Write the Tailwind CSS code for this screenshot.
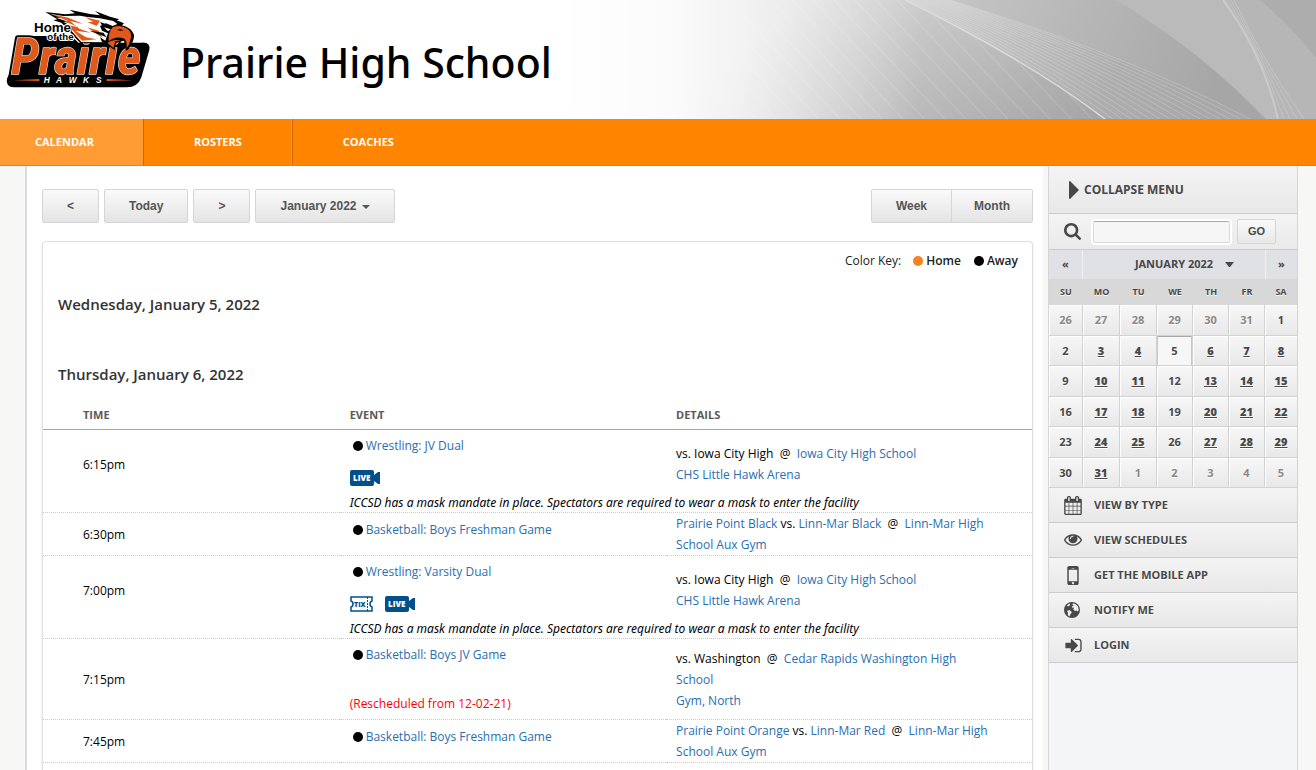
<!DOCTYPE html>
<html lang="en">
<head>
    <meta charset="UTF-8">
    <meta name="viewport" content="width=device-width, initial-scale=1.0">
    <title>Prairie High School - Calendar</title>
    <script src="https://cdn.jsdelivr.net/npm/@tailwindcss/browser@4"></script>
</head>
<body class="flex min-h-screen flex-col bg-[#f7f7f5] font-['Open_Sans',sans-serif] text-xs text-black">
    <!-- banner -->
    <header class="relative flex h-[119px] shrink-0 overflow-hidden bg-white">
        <svg class="absolute right-0 top-0 h-[119px] w-[756px]" viewBox="0 0 756 119" aria-hidden="true">
            <defs>
                <linearGradient id="base" gradientUnits="userSpaceOnUse" x1="250" y1="0" x2="400" y2="210">
                    <stop offset="0" stop-color="#d8d8d8"/>
                    <stop offset="1" stop-color="#a6a6a6"/>
                </linearGradient>
                <linearGradient id="band" gradientUnits="userSpaceOnUse" x1="345" y1="0" x2="640" y2="119">
                    <stop offset="0" stop-color="#d2d2d2"/>
                    <stop offset=".7" stop-color="#adadad"/>
                    <stop offset="1" stop-color="#a8a8a8"/>
                </linearGradient>
                <linearGradient id="dark" gradientUnits="userSpaceOnUse" x1="400" y1="0" x2="640" y2="119">
                    <stop offset="0" stop-color="#c4c4c4"/>
                    <stop offset="1" stop-color="#a6a6a6"/>
                </linearGradient>
                <linearGradient id="fade">
                    <stop offset="0" stop-color="#fff"/>
                    <stop offset=".3" stop-color="#fff" stop-opacity=".9"/>
                    <stop offset=".5" stop-color="#fff" stop-opacity=".7"/>
                    <stop offset=".7" stop-color="#fff" stop-opacity=".4"/>
                    <stop offset="1" stop-color="#fff" stop-opacity="0"/>
                </linearGradient>
                <pattern id="hatch" width="21" height="40" patternUnits="userSpaceOnUse" patternTransform="skewX(43)">
                    <path d="M1 0V40" stroke="#fff" stroke-opacity=".22"/>
                </pattern>
            </defs>
            <rect width="756" height="119" fill="#b6b6b6"/>
            <path d="M0 0H345Q467 60 545 119H0Z" fill="url(#base)"/>
            <path d="M180 0H345Q467 60 545 119H180Z" fill="url(#hatch)"/>
            <path d="M345 0H556Q640 50 706 119H545Q467 60 345 0Z" fill="url(#dark)"/>
            <path d="M345 0H390Q570 56 690 119H545Q467 60 345 0Z" fill="url(#band)"/>
            <path d="M556 0H662Q702 50 718 119H706Q640 50 556 0Z" fill="#bababa"/>
            <path d="M700 0H756V58Q730 25 700 0Z" fill="#adadad"/>
            <g fill="none" stroke="#fff" stroke-opacity=".2">
                <path d="M348 0Q474 60 553 119M351 0Q480 60 562 119M354 0Q487 60 571 119M357 0Q494 60 580 119M360 0Q501 59 590 119M363 0Q508 59 600 119M366 0Q515 59 610 119M369 0Q522 58 620 119M372 0Q529 58 630 119M375 0Q536 58 640 119M378 0Q543 57 650 119M381 0Q550 57 660 119M384 0Q557 57 670 119M387 0Q564 56 680 119M390 0Q570 56 690 119"/>
                <path d="M665 0Q700 50 724 119M668 0Q701 55 730 119M671 0Q703 60 737 119M674 0Q703 60 744 119"/>
            </g>
            <path d="M345 0Q467 60 545 119" fill="none" stroke="#dcdcdc" stroke-width="1.5"/>
            <path d="M663 0Q704 56 718 119" fill="none" stroke="#cacaca" stroke-width="2"/>
            <rect width="360" height="119" fill="url(#fade)"/>
        </svg>
        <div class="relative flex items-start">
            <svg class="h-[100px] w-[170px] shrink-0" viewBox="0 0 510 300" role="img" aria-label="Home of the Prairie Hawks">
                <path d="M58 108H215L235 128H425Q452 126 448 150L424 232Q414 262 380 262H42Q16 260 21 236L34 205L54 140L48 124Q48 108 58 108Z" fill="#000"/>
                <g font-family="Liberation Sans Narrow, Roboto Condensed, Liberation Sans, sans-serif" font-weight="700" font-style="italic" font-size="150" stroke-linejoin="round">
                    <text x="34" y="221" fill="#000" stroke="#000" stroke-width="16">Prairie</text>
                    <text x="34" y="221" fill="#e0581a" stroke="#ddd" stroke-width="4" paint-order="stroke">Prairie</text>
                </g>
                <!-- hawk head -->
                <path d="M136 36L196 43L225 40L208 29L270 42L300 46L285 33L330 50L358 58L350 61L372 70L366 76Q395 84 402 104Q403 120 392 136Q388 148 378 152L372 122L348 128L344 150L310 128H240L212 98L184 68L160 61L172 58Z" fill="#000"/>
                <path d="M148 41L190 48L240 47L262 51L300 55L340 63L352 72L338 78L318 70L300 78L306 92L324 100L316 122L300 112L306 126H244L214 92L226 84L190 66L214 68L168 53L188 53Z" fill="#fff"/>
                <path d="M152 42L205 53L250 72L210 63L238 86L272 98L226 92L258 112L290 118L246 122L222 96L205 76L236 82L190 62L206 64Z" fill="#e0581a"/>
                <path d="M256 52L300 62L290 78L262 66L280 66ZM262 82L296 92L308 114L284 98Z" fill="#e0581a"/>
                <path d="M300 66L346 82L334 90L326 84L312 86ZM268 92L310 98L320 112L300 104Z" fill="#000"/>
                <path d="M312 82L332 88L324 94Z" fill="#fff"/>
                <path d="M338 82Q362 72 382 86Q398 98 392 116Q390 132 380 144Q382 118 368 114Q344 108 326 124Q324 96 338 82Z" fill="#e0581a"/>
                <path d="M350 90Q362 85 370 92Q360 93 350 90Z" fill="#000"/>
                <path d="M322 128Q340 116 362 122L346 124L340 144Z" fill="#e0581a"/>
                <g font-family="Liberation Sans, Arial, sans-serif" font-weight="700" paint-order="stroke" stroke-linejoin="round">
                    <text x="102" y="96" font-size="40" fill="#000" stroke="#fff" stroke-width="6">Home</text>
                    <text x="142" y="120" font-size="29" fill="#000" stroke="#fff" stroke-width="6">of the</text>
                    <text y="248" font-size="25" font-style="italic" fill="#fff"><tspan x="131">H</tspan><tspan x="168">A</tspan><tspan x="206">W</tspan><tspan x="249">K</tspan><tspan x="288">S</tspan></text>
                </g>
                <path d="M40 241L118 237V243ZM398 241L320 237V243Z" fill="#e0581a"/>
            </svg>
            <h1 class="ml-2.5 mt-8 font-['Noto_Sans','Open_Sans',sans-serif] text-[41px] font-medium leading-[60px]">Prairie High School</h1>
        </div>
    </header>

    <!-- main nav -->
    <nav class="flex h-[47px] shrink-0 border-b border-[#f57c00] bg-[#ff8400] text-[11px] font-bold leading-[46px] text-white">
        <a href="#" class="border-r border-[#cc6900] bg-[#ff9c33] pl-[35px] pr-[49px]">CALENDAR</a>
        <a href="#" class="border-r border-[#cc6900] px-[50px] shadow-[inset_-1px_0_0_#ff9c33]">ROSTERS</a>
        <a href="#" class="px-[50px]">COACHES</a>
    </nav>

    <div class="flex flex-1 pl-[25px] pr-[18px]">
        <main class="flex min-w-0 flex-1 flex-col border-l-2 border-[#dcdcdc] bg-white pl-[15px] pr-2.5 pt-[23px]">
            <div class="flex justify-between font-['Liberation_Sans',Arial,sans-serif] font-bold text-[#555] [text-shadow:0_1px_0_#fff]">
                <div class="flex gap-[5px]">
                    <button type="button" aria-label="Previous" class="h-[34px] rounded-xs border border-[#d5d5d5] bg-linear-to-b from-[#fafafa] to-[#e4e4e4] px-6">&lt;</button>
                    <button type="button" class="h-[34px] rounded-xs border border-[#d5d5d5] bg-linear-to-b from-[#fafafa] to-[#e4e4e4] px-6">Today</button>
                    <button type="button" aria-label="Next" class="h-[34px] rounded-xs border border-[#d5d5d5] bg-linear-to-b from-[#fafafa] to-[#e4e4e4] px-6">&gt;</button>
                    <button type="button" class="flex h-[34px] items-center gap-[5px] rounded-xs border border-[#d5d5d5] bg-linear-to-b from-[#fafafa] to-[#e4e4e4] px-6">
                        January 2022
                        <svg class="mt-0.5 h-1 w-2" viewBox="0 0 8 4" fill="#555"><path d="M0 0H8L4 4Z"/></svg>
                    </button>
                </div>
                <div class="flex">
                    <button type="button" class="h-[34px] rounded-l-xs border border-[#d5d5d5] bg-linear-to-b from-[#fafafa] to-[#e4e4e4] px-6">Week</button>
                    <button type="button" class="-ml-px h-[34px] rounded-r-xs border border-[#d5d5d5] bg-linear-to-b from-[#fafafa] to-[#e4e4e4] px-[22px]">Month</button>
                </div>
            </div>

            <section class="mt-[18px] flex-1 rounded-t border border-b-0 border-[#e0e0e0] pt-2 shadow-sm">
                <div class="flex justify-end pr-3.5 leading-[21px] text-[#222]">
                    <span>Color Key:</span>
                    <span class="ml-3 flex items-center gap-[3px] font-semibold"><i class="size-2.5 rounded-full bg-[#f58220]"></i>Home</span>
                    <span class="ml-[13px] flex items-center gap-[3px] font-semibold"><i class="size-2.5 rounded-full bg-black"></i>Away</span>
                </div>
                <h2 class="mt-[23px] pl-[15px] text-[15px] font-semibold leading-5 text-[#333]">Wednesday, January 5, 2022</h2>
                <h2 class="mt-[50px] pl-[15px] text-[15px] font-semibold leading-5 text-[#333]">Thursday, January 6, 2022</h2>

                <table class="mt-[23px] w-full table-fixed border-separate border-spacing-0 leading-[21px] [&_a]:text-[#2a6eb0]">
                    <thead class="text-left text-[11px] leading-4 text-[#5a5a5a]">
                        <tr>
                            <th class="w-[30%] border-b border-[#a8a8a8] pb-1.5 pl-10">TIME</th>
                            <th class="w-[33%] border-b border-[#a8a8a8] pb-1.5 pl-2.5">EVENT</th>
                            <th class="border-b border-[#a8a8a8] pb-1.5 pl-2.5">DETAILS</th>
                        </tr>
                    </thead>
                    <tbody>
                        <tr>
                            <td class="h-[68px] pl-10">6:15pm</td>
                            <td class="pl-2.5 pt-[5px] align-top">
                                <div class="flex items-center gap-[3px] pl-[3px]"><i class="size-2.5 rounded-full bg-black"></i><a href="#">Wrestling: JV Dual</a></div>
                                <svg class="mt-3.5 h-4 w-[30px]" viewBox="0 0 30 16" role="img" aria-label="Live"><path d="M2 0H22Q24 0 24 2V5L28 2H30V14H28L24 11V14Q24 16 22 16H2Q0 16 0 14V2Q0 0 2 0Z" fill="#00508c"/><text x="3" y="11" font-family="Open Sans, sans-serif" font-size="8" font-weight="800" fill="#fff">LIVE</text></svg>
                            </td>
                            <td class="pl-2.5 pr-10">vs. Iowa City High &nbsp;@&nbsp; <a href="#">Iowa City High School<br>CHS Little Hawk Arena</a></td>
                        </tr>
                        <tr class="font-['Noto_Sans','Open_Sans',sans-serif] italic leading-[10px]">
                            <td class="border-b border-dotted border-[#ccc]"></td>
                            <td colspan="2" class="border-b border-dotted border-[#ccc] pb-1 pl-2.5">ICCSD has a mask mandate in place. Spectators are required to wear a mask to enter the facility</td>
                        </tr>
                        <tr>
                            <td class="border-b border-dotted border-[#ccc] pl-10">6:30pm</td>
                            <td class="border-b border-dotted border-[#ccc] pl-2.5 pt-1.5 align-top">
                                <div class="flex items-center gap-[3px] pl-[3px]"><i class="size-2.5 rounded-full bg-black"></i><a href="#">Basketball: Boys Freshman Game</a></div>
                            </td>
                            <td class="border-b border-dotted border-[#ccc] pl-2.5 pr-10"><a href="#">Prairie Point Black</a> vs. <a href="#">Linn-Mar Black</a> &nbsp;@&nbsp; <a href="#">Linn-Mar High School Aux Gym</a></td>
                        </tr>
                        <tr>
                            <td class="h-[68px] pl-10">7:00pm</td>
                            <td class="pl-2.5 pt-[5px] align-top">
                                <div class="flex items-center gap-[3px] pl-[3px]"><i class="size-2.5 rounded-full bg-black"></i><a href="#">Wrestling: Varsity Dual</a></div>
                                <div class="mt-3.5 flex gap-3">
                                    <svg class="h-4 w-[23px]" viewBox="0 0 23 16" role="img" aria-label="Tickets"><path d="M1 1H22V5Q20 5.500 20 8T22 11V15H1V11Q3 10.500 3 8T1 5Z" fill="#fff" stroke="#00508c" stroke-width="1.5"/><path d="M17.500 1V15" stroke="#00508c" stroke-dasharray="2 1"/><text x="4" y="11" font-family="Open Sans, sans-serif" font-size="7" font-weight="800" fill="#00508c">TIX</text></svg>
                                    <svg class="h-4 w-[30px]" viewBox="0 0 30 16" role="img" aria-label="Live"><path d="M2 0H22Q24 0 24 2V5L28 2H30V14H28L24 11V14Q24 16 22 16H2Q0 16 0 14V2Q0 0 2 0Z" fill="#00508c"/><text x="3" y="11" font-family="Open Sans, sans-serif" font-size="8" font-weight="800" fill="#fff">LIVE</text></svg>
                                </div>
                            </td>
                            <td class="pl-2.5 pr-10">vs. Iowa City High &nbsp;@&nbsp; <a href="#">Iowa City High School<br>CHS Little Hawk Arena</a></td>
                        </tr>
                        <tr class="font-['Noto_Sans','Open_Sans',sans-serif] italic leading-[10px]">
                            <td class="border-b border-dotted border-[#ccc]"></td>
                            <td colspan="2" class="border-b border-dotted border-[#ccc] pb-1 pl-2.5">ICCSD has a mask mandate in place. Spectators are required to wear a mask to enter the facility</td>
                        </tr>
                        <tr>
                            <td class="border-b border-dotted border-[#ccc] pl-10">7:15pm</td>
                            <td class="border-b border-dotted border-[#ccc] pb-[5px] pl-2.5 pt-[5px] align-top">
                                <div class="flex items-center gap-[3px] pl-[3px]"><i class="size-2.5 rounded-full bg-black"></i><a href="#">Basketball: Boys JV Game</a></div>
                                <p class="mt-7 text-[#f00]">(Rescheduled from 12-02-21)</p>
                            </td>
                            <td class="border-b border-dotted border-[#ccc] pl-2.5 pr-10">vs. Washington &nbsp;@&nbsp; <a href="#">Cedar Rapids Washington High School<br>Gym, North</a></td>
                        </tr>
                        <tr>
                            <td class="border-b border-dotted border-[#ccc] pl-10">7:45pm</td>
                            <td class="border-b border-dotted border-[#ccc] pl-2.5 pt-1.5 align-top">
                                <div class="flex items-center gap-[3px] pl-[3px]"><i class="size-2.5 rounded-full bg-black"></i><a href="#">Basketball: Boys Freshman Game</a></div>
                            </td>
                            <td class="border-b border-dotted border-[#ccc] pl-2.5 pr-10"><a href="#">Prairie Point Orange</a> vs. <a href="#">Linn-Mar Red</a> &nbsp;@&nbsp; <a href="#">Linn-Mar High School Aux Gym</a></td>
                        </tr>
                    </tbody>
                </table>
            </section>
        </main>

        <!-- sidebar -->
        <aside class="ml-[5px] w-[250px] shrink-0 border-x border-[#d5d5d5] bg-[#f4f5f7] text-[11px] font-bold text-[#484848] [text-shadow:0_1px_0_#fff]">
            <button type="button" class="flex h-12 w-full items-center gap-[5px] border-b border-[#ccc] bg-linear-to-b from-[#f4f4f4] to-[#e8e8e8] pl-5 text-xs">
                <svg class="h-[18px] w-2.5" viewBox="0 0 10 18" fill="#484848"><path d="M0 1Q0 0 1 0L10 9L1 18Q0 18 0 17Z"/></svg>
                COLLAPSE MENU
            </button>
            <form class="flex h-9 items-center border-b border-[#ccc] bg-linear-to-b from-[#f4f4f4] to-[#eaeaea] pl-[15px]">
                <label for="search" aria-label="Search"><svg class="size-[17px]" viewBox="64 128 1664 1664" fill="#484848"><path d="M1216 832q0-185-131.5-316.5t-316.5-131.5-316.5 131.5-131.5 316.5 131.5 316.5 316.5 131.5 316.5-131.5 131.5-316.5zm512 832q0 52-38 90t-90 38q-54 0-90-38l-343-342q-179 124-399 124-143 0-273.5-55.5t-225-150-150-225-55.5-273.5 55.5-273.5 150-225 225-150 273.5-55.5 273.5 55.5 225 150 150 225 55.5 273.5q0 220-124 399l343 343q37 37 37 90z"/></svg></label>
                <input id="search" type="text" class="ml-3 h-[22px] w-[137px] rounded-xs border border-[#d8d8d8] border-t-[#aaa] bg-[#f6f6f6] px-1.5 ring-2 ring-white">
                <button type="submit" class="ml-[7px] h-[25px] w-[39px] rounded-xs border border-[#d5d5d5] bg-linear-to-b from-[#fafafa] to-[#e8e8e8] font-['Liberation_Sans',Arial,sans-serif] font-bold">GO</button>
            </form>
            <div class="flex h-[29px] items-center bg-[#e0e1e4]">
                <button type="button" aria-label="Previous month" class="h-full w-[34px] border-r border-[#f0f0f0]">«</button>
                <button type="button" class="flex h-full flex-1 items-center justify-center gap-3 pl-[21px]">JANUARY 2022
                    <svg class="h-[5px] w-[9px]" viewBox="0 0 9 5" fill="#484848"><path d="M0 0H9L5 5H4Z"/></svg>
                </button>
                <button type="button" aria-label="Next month" class="h-full w-8 border-l border-[#f0f0f0]">»</button>
            </div>
            <table class="w-full table-fixed border-separate border-spacing-0 text-center leading-4 [&_a]:font-extrabold [&_a]:underline">
                <thead class="bg-[#d8d8d8] text-[9px]">
                    <tr class="h-[26px]"><th class="w-[34px]">SU</th><th class="w-[37px]">MO</th><th class="w-[37px]">TU</th><th class="w-9">WE</th><th class="w-9">TH</th><th class="w-9">FR</th><th>SA</th></tr>
                </thead>
                <tbody class="[&_td]:h-[30px] [&_tr:nth-child(odd)_td]:h-[31px] [&_td]:border-b [&_td]:border-r [&_td]:border-[#d2d2d2] [&_td]:bg-linear-to-b [&_td]:from-[#f7f7f7] [&_td]:to-[#e8e8e8] [&_td]:p-0 [&_td]:shadow-[inset_1px_1px_0_#fff] [&_td:last-child]:border-r-0">
                    <tr class="text-[#888]"><td>26</td><td>27</td><td>28</td><td>29</td><td>30</td><td>31</td><td class="text-[#484848]">1</td></tr>
                    <tr><td>2</td><td><a href="#">3</a></td><td><a href="#">4</a></td><td><span class="flex h-[29px] items-center justify-center border border-b-0 border-[#c8c8c8] border-t-[#aaa] bg-[#f7f7f7]">5</span></td><td><a href="#">6</a></td><td><a href="#">7</a></td><td><a href="#">8</a></td></tr>
                    <tr><td>9</td><td><a href="#">10</a></td><td><a href="#">11</a></td><td>12</td><td><a href="#">13</a></td><td><a href="#">14</a></td><td><a href="#">15</a></td></tr>
                    <tr><td>16</td><td><a href="#">17</a></td><td><a href="#">18</a></td><td>19</td><td><a href="#">20</a></td><td><a href="#">21</a></td><td><a href="#">22</a></td></tr>
                    <tr><td>23</td><td><a href="#">24</a></td><td><a href="#">25</a></td><td>26</td><td><a href="#">27</a></td><td><a href="#">28</a></td><td><a href="#">29</a></td></tr>
                    <tr class="text-[#888]"><td class="text-[#484848]">30</td><td class="text-[#484848]"><a href="#">31</a></td><td>1</td><td>2</td><td>3</td><td>4</td><td>5</td></tr>
                </tbody>
            </table>
            <ul class="[&_a]:flex [&_a]:h-[35px] [&_a]:items-center [&_a]:border-b [&_a]:border-[#ccc] [&_a]:bg-linear-to-b [&_a]:from-[#f4f4f4] [&_a]:to-[#e8e8e8] [&_a]:pl-[15px] [&_i]:flex [&_i]:w-[30px]">
                <li><a href="#"><i><svg class="h-[19px] w-[18px]" viewBox="64 0 1664 1792" fill="#484848"><path d="M192 1664h288v-288h-288v288zm352 0h320v-288h-320v288zm-352-352h288v-320h-288v320zm352 0h320v-320h-320v320zm-352-384h288v-288h-288v288zm736 736h320v-288h-320v288zm-384-736h320v-288h-320v288zm768 736h288v-288h-288v288zm-384-352h320v-320h-320v320zm-352-864v-288q0-13-9.5-22.5t-22.5-9.5h-64q-13 0-22.5 9.5t-9.5 22.5v288q0 13 9.5 22.5t22.5 9.5h64q13 0 22.5-9.5t9.5-22.5zm736 864h288v-320h-288v320zm-384-384h320v-288h-320v288zm384 0h288v-288h-288v288zm32-480v-288q0-13-9.5-22.5t-22.5-9.5h-64q-13 0-22.5 9.5t-9.5 22.5v288q0 13 9.5 22.5t22.5 9.5h64q13 0 22.5-9.5t9.5-22.5zm384-64v1280q0 52-38 90t-90 38h-1408q-52 0-90-38t-38-90v-1280q0-52 38-90t90-38h128v-96q0-66 47-113t113-47h64q66 0 113 47t47 113v96h384v-96q0-66 47-113t113-47h64q66 0 113 47t47 113v96h128q52 0 90 38t38 90z"/></svg></i>VIEW BY TYPE</a></li>
                <li><a href="#"><i><svg class="size-[18px]" viewBox="0 64 1792 1792" fill="#484848"><path d="M1664 960q-152-236-381-353 61 104 61 225 0 185-131.5 316.5t-316.5 131.5-316.5-131.5-131.5-316.5q0-121 61-225-229 117-381 353 133 205 333.5 326.5t434.5 121.5 434.5-121.5 333.5-326.5zm-720-384q0-20-14-34t-34-14q-125 0-214.5 89.5t-89.5 214.5q0 20 14 34t34 14 34-14 14-34q0-86 61-147t147-61q20 0 34-14t14-34zm848 384q0 34-20 69-140 230-376.5 368.5t-499.5 138.5-499.5-139-376.5-368q-20-35-20-69t20-69q140-229 376.5-368t499.5-139 499.5 139 376.5 368q20 35 20 69z"/></svg></i>VIEW SCHEDULES</a></li>
                <li><a href="#"><i><svg class="h-[19px] w-[18px]" viewBox="512 256 768 1280" fill="#484848"><path d="M976 1408q0-33-23.5-56.5t-56.5-23.5-56.5 23.5-23.5 56.5 23.5 56.5 56.5 23.5 56.5-23.5 23.5-56.5zm208-160v-704q0-13-9.5-22.5t-22.5-9.5h-512q-13 0-22.5 9.5t-9.5 22.5v704q0 13 9.5 22.5t22.5 9.5h512q13 0 22.5-9.5t9.5-22.5zm-192-848q0-16-16-16h-160q-16 0-16 16t16 16h160q16 0 16-16zm288-16v1024q0 52-38 90t-90 38h-512q-52 0-90-38t-38-90v-1024q0-52 38-90t90-38h512q52 0 90 38t38 90z"/></svg></i>GET THE MOBILE APP</a></li>
                <li><a href="#"><i><svg class="size-4" viewBox="0 0 16 16"><circle cx="8" cy="8" r="8" fill="#484848"/><path d="M9 1.2Q12 1.6 14 4.4L14.8 8L13.6 9.6L12.4 8.4L11 9L9.4 7.6L10 5.4L8.2 5.8L7.8 4.6L9.8 3.6L8.4 2.8ZM5.4 8L7.8 10L7 11.6L6 13L5.4 14.6L3.8 13.2L4 11L3 9ZM3 3.4L5 1.8L6.4 2L5.2 4L4 4.6Z" fill="#eee"/></svg></i>NOTIFY ME</a></li>
                <li><a href="#"><i><svg class="size-[19px]" viewBox="64 0 1664 1792" fill="#484848"><path d="M1312 896q0 26-19 45l-544 544q-19 19-45 19t-45-19-19-45v-288h-448q-26 0-45-19t-19-45v-384q0-26 19-45t45-19h448v-288q0-26 19-45t45-19 45 19l544 544q19 19 19 45zm352-352v704q0 119-84.5 203.5t-203.5 84.5h-320q-13 0-22.5-9.5t-9.5-22.5q0-4-1-20t-.5-26.5 3-23.5 10-19.5 20.5-6.5h320q66 0 113-47t47-113v-704q0-66-47-113t-113-47h-312l-11.5-1-11.5-3-8-5.5-7-9-2-13.5q0-4-1-20t-.5-26.5 3-23.5 10-19.5 20.5-6.5h320q119 0 203.5 84.5t84.5 203.5z"/></svg></i>LOGIN</a></li>
            </ul>
        </aside>
    </div>
</body>
</html>
